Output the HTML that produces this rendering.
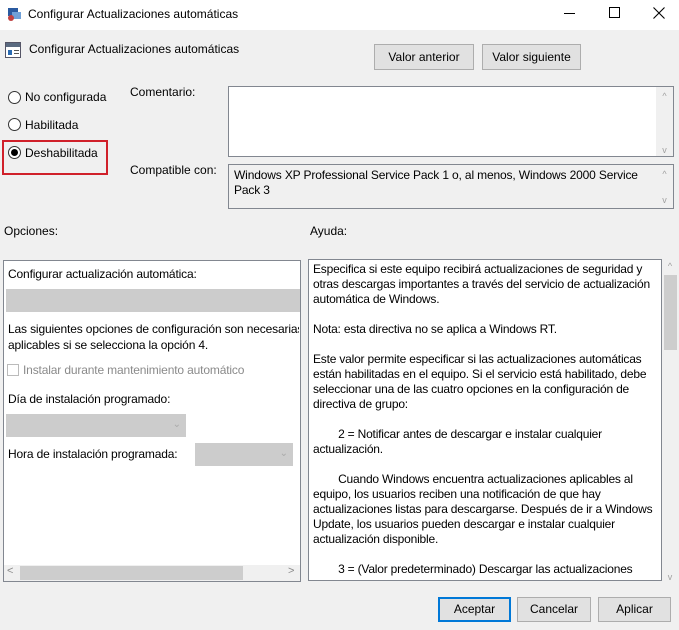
<!DOCTYPE html>
<html><head><meta charset="utf-8"><style>
*{box-sizing:border-box;margin:0;padding:0}
body{width:679px;height:630px;background:#f0f0f0;font-family:"Liberation Sans",sans-serif;font-size:12px;color:#000;position:relative;overflow:hidden}
.a{position:absolute;white-space:nowrap}
.btn{position:absolute;background:#e1e1e1;border:1px solid #adadad;text-align:center;line-height:24px;font-size:12px}
.radio{position:absolute;width:13px;height:13px;border:1px solid #333;border-radius:50%;background:#fff}
.sb{position:absolute;background:#f0f0f0;color:#a0a0a0;font-size:9px;text-align:center}
</style></head><body>
<div class="a" style="left:0;top:0;width:679px;height:30px;background:#fff"></div>
<svg class="a" style="left:6px;top:6px" width="16" height="16"><rect x="2" y="2" width="10" height="8" fill="#2a5aa0"/><rect x="6" y="6" width="9" height="7" fill="#6fa0d8"/><circle cx="5" cy="12" r="3" fill="#c04040"/></svg>
<div class="a" style="left:28px;top:7px;font-size:12px">Configurar Actualizaciones automáticas</div>
<div class="a" style="left:564px;top:13px;width:11px;height:1px;background:#000"></div>
<div class="a" style="left:609px;top:7px;width:11px;height:11px;border:1px solid #000"></div>
<svg class="a" style="left:653px;top:7px" width="12" height="12"><path d="M0.5 0.5L11.5 11.5M11.5 0.5L0.5 11.5" stroke="#000" stroke-width="1.1"/></svg>

<svg class="a" style="left:5px;top:42px" width="16" height="16"><rect x="0.5" y="0.5" width="15" height="15" fill="#fff" stroke="#556"/><rect x="1" y="1" width="14" height="4" fill="#5a6a80"/><rect x="3" y="8" width="4" height="5" fill="#2a6ab0"/><rect x="9" y="8" width="5" height="1" fill="#555"/><rect x="9" y="11" width="5" height="1" fill="#555"/></svg>
<div class="a" style="left:29px;top:42px">Configurar Actualizaciones automáticas</div>
<div class="btn" style="left:374px;top:44px;width:100px;height:26px">Valor anterior</div>
<div class="btn" style="left:482px;top:44px;width:99px;height:26px">Valor siguiente</div>

<div class="radio" style="left:8px;top:91px"></div><div class="a" style="left:25px;top:90px">No configurada</div>
<div class="radio" style="left:8px;top:118px"></div><div class="a" style="left:25px;top:118px">Habilitada</div>
<div class="radio" style="left:8px;top:146px"></div><div class="a" style="left:11px;top:149px;width:7px;height:7px;border-radius:50%;background:#000"></div>
<div class="a" style="left:25px;top:146px">Deshabilitada</div>
<div class="a" style="left:2px;top:140px;width:106px;height:35px;border:2px solid #d0202a"></div>

<div class="a" style="left:130px;top:85px">Comentario:</div>
<div class="a" style="left:228px;top:86px;width:446px;height:71px;border:1px solid #828790;background:#fff"></div>
<div class="sb" style="left:656px;top:87px;width:17px;height:69px"><div style="margin-top:4px">&#94;</div><div style="margin-top:44px">v</div></div>
<div class="a" style="left:130px;top:163px">Compatible con:</div>
<div class="a" style="left:228px;top:164px;width:446px;height:45px;border:1px solid #828790;background:#f0f0f0"></div>
<div class="a" style="left:234px;top:168px;line-height:15px;white-space:normal;width:420px;letter-spacing:-0.15px">Windows XP Professional Service Pack 1 o, al menos, Windows 2000 Service Pack 3</div>
<div class="sb" style="left:656px;top:165px;width:17px;height:43px"><div style="margin-top:4px">&#94;</div><div style="margin-top:16px">v</div></div>

<div class="a" style="left:4px;top:224px">Opciones:</div>
<div class="a" style="left:310px;top:224px">Ayuda:</div>

<div class="a" style="left:3px;top:260px;width:298px;height:322px;border:1px solid #828790;background:#fff"></div>
<div class="a" style="left:8px;top:267px;letter-spacing:-0.15px">Configurar actualización automática:</div>
<div class="a" style="left:6px;top:289px;width:294px;height:23px;background:#ccc"></div>
<div class="a" style="left:8px;top:321px;line-height:16px;overflow:hidden;width:291px;letter-spacing:-0.15px">Las siguientes opciones de configuración son necesarias<br>aplicables si se selecciona la opción 4.</div>
<div class="a" style="left:7px;top:364px;width:12px;height:12px;border:1px solid #bbb"></div>
<div class="a" style="left:23px;top:363px;color:#8a8a8a;letter-spacing:-0.15px">Instalar durante mantenimiento automático</div>
<div class="a" style="left:8px;top:392px;letter-spacing:-0.15px">Día de instalación programado:</div>
<div class="a" style="left:6px;top:414px;width:180px;height:23px;background:#ccc;color:#aaa;text-align:right;padding-right:5px;line-height:22px;font-size:10px">&#8964;</div>
<div class="a" style="left:8px;top:447px;letter-spacing:-0.15px">Hora de instalación programada:</div>
<div class="a" style="left:195px;top:443px;width:98px;height:23px;background:#ccc;color:#aaa;text-align:right;padding-right:5px;line-height:22px;font-size:10px">&#8964;</div>
<div class="a" style="left:4px;top:565px;width:296px;height:16px;background:#f0f0f0"></div>
<div class="a" style="left:20px;top:566px;width:223px;height:14px;background:#cdcdcd"></div>
<div class="a" style="left:7px;top:565px;color:#888;font-size:11px">&lt;</div>
<div class="a" style="left:288px;top:565px;color:#888;font-size:11px">&gt;</div>

<div class="a" style="left:308px;top:259px;width:354px;height:322px;border:1px solid #828790;background:#fff"></div>
<div class="a" style="left:313px;top:262px;width:342px;line-height:15px;white-space:normal;letter-spacing:-0.2px">
Especifica si este equipo recibirá actualizaciones de seguridad y otras descargas importantes a través del servicio de actualización automática de Windows.<br><br>Nota: esta directiva no se aplica a Windows RT.<br><br>Este valor permite especificar si las actualizaciones automáticas están habilitadas en el equipo. Si el servicio está habilitado, debe seleccionar una de las cuatro opciones en la configuración de directiva de grupo:<br><br>&nbsp;&nbsp;&nbsp;&nbsp;&nbsp;&nbsp;&nbsp;&nbsp;2 = Notificar antes de descargar e instalar cualquier actualización.<br><br>&nbsp;&nbsp;&nbsp;&nbsp;&nbsp;&nbsp;&nbsp;&nbsp;Cuando Windows encuentra actualizaciones aplicables al equipo, los usuarios reciben una notificación de que hay actualizaciones listas para descargarse. Después de ir a Windows Update, los usuarios pueden descargar e instalar cualquier actualización disponible.<br><br>&nbsp;&nbsp;&nbsp;&nbsp;&nbsp;&nbsp;&nbsp;&nbsp;3 = (Valor predeterminado) Descargar las actualizaciones</div>
<div class="a" style="left:309px;top:577px;width:352px;height:3px;background:#fff"></div>
<div class="sb" style="left:662px;top:259px;width:16px;height:322px"><div style="margin-top:2px">&#94;</div><div style="margin-top:301px">v</div></div>
<div class="a" style="left:664px;top:275px;width:13px;height:75px;background:#cdcdcd"></div>

<div class="btn" style="left:438px;top:597px;width:73px;height:25px;border:2px solid #0078d7;line-height:21px">Aceptar</div>
<div class="btn" style="left:517px;top:597px;width:74px;height:25px;line-height:23px">Cancelar</div>
<div class="btn" style="left:598px;top:597px;width:73px;height:25px;line-height:23px">Aplicar</div>
</body></html>
